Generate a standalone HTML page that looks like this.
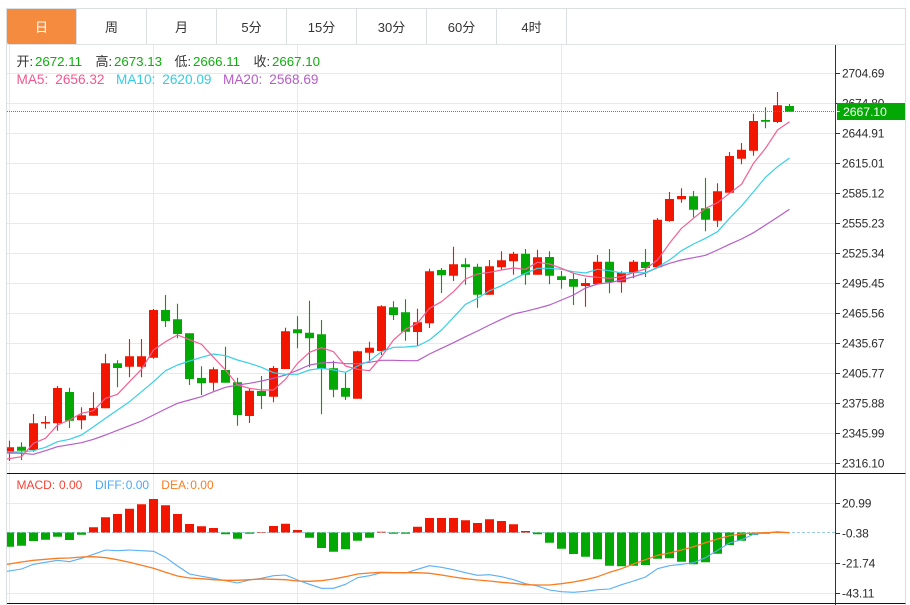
<!DOCTYPE html>
<html lang="zh">
<head>
<meta charset="utf-8">
<title>K线图</title>
<style>
html,body{margin:0;padding:0;background:#fff;width:910px;height:605px;overflow:hidden}
svg{display:block}
text{font-family:"Liberation Sans","Noto Sans CJK SC",sans-serif}
.t{font-size:13px;fill:#333;text-anchor:middle}
.a{font-size:12px;fill:#2b2b2b;letter-spacing:-.15px}
.v{font-size:13.3px;fill:#10ac10}
.l{font-size:13px;fill:#333}
</style>
</head>
<body>
<svg width="910" height="605" viewBox="0 0 910 605" xmlns="http://www.w3.org/2000/svg">
<defs><clipPath id="c"><rect x="7" y="45" width="828" height="560"/></clipPath></defs>

<!-- frame -->
<path d="M6.5 605V8.5H905.5V605" fill="none" stroke="#dcdfe2"/>
<path d="M7 44.5H905.5" stroke="#dfe3e6"/>
<path d="M146.5 9V44M216.5 9V44M286.5 9V44M356.5 9V44M426.5 9V44M496.5 9V44M566.5 9V44M76.5 9V44" stroke="#dcdfe2"/>
<path d="M7 9H76V44H9Q7 44 7 42Z" fill="#f48b3f"/>

<text class="t" x="41.5" y="32" style="fill:#fff">日</text>
<text class="t" x="111.5" y="32">周</text>
<text class="t" x="181.5" y="32">月</text>
<text class="t" x="251.5" y="32">5分</text>
<text class="t" x="321.5" y="32">15分</text>
<text class="t" x="391.5" y="32">30分</text>
<text class="t" x="461.5" y="32">60分</text>
<text class="t" x="531.5" y="32">4时</text>

<!-- grid -->
<path d="M7 73.5H835M7 103.5H835M7 133.5H835M7 163.5H835M7 193.5H835M7 223.5H835M7 253.5H835M7 283.5H835M7 313.5H835M7 343.5H835M7 373.5H835M7 403.5H835M7 433.5H835M7 463.5H835M7 503.5H835M7 563.5H835M7 593.5H835M9.5 45V605M153.5 45V605M297.5 45V605M561.5 45V605" stroke="#e4eaf0" fill="none"/>

<g clip-path="url(#c)">
<!-- zero line -->
<path d="M7 532.5H835" stroke="#9ccbe8" stroke-dasharray="3 2" fill="none"/>

<!-- red wicks -->
<path fill="none" stroke="#f21500" stroke-width="1.1" d="M9.5 440.7V461M33.5 414V451.7M45.5 416V428.7M57.5 386V430.7M81.5 407.3V429.3M93.5 392.3V415.7M105.5 354V408.3M129.5 339V377.3M141.5 339V377.3M153.5 309V358.7M213.5 367.3V390.7M249.5 388.3V423M273.5 366V402.3M285.5 327.7V369M357.5 350.7V398.7M369.5 341.7V361.7M381.5 305.3V355M417.5 308.7V346M429.5 268.7V328M453.5 246.7V281M489.5 260V294.7M501.5 251.3V270M513.5 251.7V274.7M537.5 249.7V274.7M585.5 278.3V306.7M597.5 255V284M621.5 271.3V292.7M633.5 260V278.3M657.5 218V267.3M669.5 192V221.7M681.5 188.3V202.7M717.5 183.3V227M729.5 152V192.7M741.5 143V164.3M753.5 113.7V155.7M777.5 92V123"/>
<!-- green wicks -->
<path fill="none" stroke="#069c06" stroke-width="1.1" d="M21.5 442.3V460M69.5 387.7V428M117.5 360.3V387.3M165.5 295V327M177.5 303.7V338.3M189.5 333.3V385M201.5 366.3V395M225.5 346.7V382.7M237.5 377.7V425.7M261.5 376V409M297.5 316.3V348.3M309.5 300.7V367.3M321.5 320V414.3M333.5 360.7V397.3M345.5 372.7V400M393.5 301.3V320M405.5 299.3V340.7M441.5 268V293M465.5 258.3V284.7M477.5 263.7V307.7M525.5 249V284.7M549.5 251.3V284.3M561.5 271V288.7M573.5 272.7V305M609.5 249V293.3M645.5 249V277M693.5 191V217.3M705.5 178V231.3M765.5 107.3V128.3M789.5 104V111.7"/>
<!-- red bodies -->
<path fill="none" stroke="#f21500" stroke-width="9" d="M9.5 447.3V452.7M33.5 423.3V450M45.5 422V423.5M57.5 388V423.3M81.5 415.3V420.3M93.5 408V415.7M105.5 363.3V408.3M129.5 356.3V366.7M141.5 356.3V366.7M153.5 310V357.7M213.5 369.3V382.7M249.5 390.7V416M273.5 368V396.7M285.5 331.3V369M357.5 351.3V398.7M369.5 347.7V352.7M381.5 306.3V351M417.5 322.3V332M429.5 271.3V323.3M453.5 264.3V275.7M489.5 266.3V294.7M501.5 260.3V267.3M513.5 253.7V261.3M537.5 257.3V274.7M585.5 283V286M597.5 261.7V284M621.5 272.7V282.3M633.5 261.7V272.7M657.5 219.7V267.3M669.5 199V221M681.5 196V199.3M717.5 191.3V220.7M729.5 156V192.7M741.5 149.7V158.7M753.5 121V150.7M777.5 105.3V122"/>
<!-- green bodies -->
<path fill="none" stroke="#04a804" stroke-width="9" d="M21.5 446.7V450.7M69.5 392V420.7M117.5 363.3V368M165.5 310V321M177.5 319.3V334M189.5 333.3V379M201.5 378V383.3M225.5 370V382.7M237.5 382.3V415M261.5 391V396M297.5 329.3V333.3M309.5 332.7V338.3M321.5 334.3V369M333.5 368.3V389.7M345.5 388V396.7M393.5 307.3V315M405.5 312.3V331.7M441.5 270V275.3M465.5 264.3V267M477.5 266.7V294.7M525.5 253.7V274.7M549.5 257V275.7M561.5 276.3V280M573.5 279V286.7M609.5 261.7V282.3M645.5 262V268M693.5 196.3V209.7M705.5 208.3V219.7M765.5 120V121.7M789.5 106V111.7"/>

<!-- MA20 -->
<path fill="none" stroke="#b75dc9" stroke-width="1.2" stroke-linejoin="round" d="M7 453L21.5 453.3 33.5 454.3 45.5 450.7 57.5 446.7 69.5 444.7 81.5 442.7 93.5 439.3 105.5 435 117.5 430.3 129.5 425.7 141.5 421 153.5 415 165.5 409 177.5 403.3 189.5 400 201.5 396.7 213.5 391.7 225.5 387.3 237.5 385 249.5 383.3 261.5 381 273.5 378.3 285.5 375 297.5 370.3 309.5 365 321.5 363 333.5 362.3 345.5 363.7 357.5 363.7 369.5 362.3 381.5 360.3 393.5 360.3 405.5 360.7 417.5 360.7 429.5 354 441.5 348.3 453.5 342.7 465.5 336.7 477.5 331 489.5 325 501.5 319.3 513.5 314 525.5 311.3 537.5 308.3 549.5 305 561.5 300 573.5 295 585.5 288 597.5 284 609.5 282.7 621.5 280 633.5 276.7 645.5 273 657.5 267.7 669.5 263.3 681.5 260 693.5 257.7 705.5 255.3 717.5 250 729.5 244.3 741.5 239 753.5 232.7 765.5 225 777.5 217.3 789.5 209.3"/>
<!-- MA10 -->
<path fill="none" stroke="#38cfe6" stroke-width="1.2" stroke-linejoin="round" d="M7 451.7L21.5 452 33.5 450.7 45.5 447.3 57.5 441.7 69.5 439.3 81.5 435 93.5 426.7 105.5 418.3 117.5 410 129.5 401.7 141.5 391.7 153.5 381.7 165.5 370.7 177.5 365 189.5 361 201.5 357.3 213.5 354 225.5 355.7 237.5 360 249.5 363.3 261.5 367.3 273.5 372.7 285.5 374.3 297.5 374.3 309.5 370 321.5 368.3 333.5 370 345.5 372.3 357.5 366 369.5 361 381.5 351.7 393.5 347.3 405.5 347 417.5 346 429.5 340 441.5 330 453.5 317.3 465.5 304.3 477.5 298.3 489.5 290.7 501.5 285.7 513.5 279.3 525.5 273.3 537.5 268.3 549.5 268.3 561.5 269.3 573.5 271.7 585.5 273 597.5 269.3 609.5 270.7 621.5 273 633.5 272.7 645.5 272.7 657.5 267.3 669.5 260 681.5 250.7 693.5 244 705.5 238.3 717.5 231.7 729.5 218.3 741.5 206 753.5 191.7 765.5 177.3 777.5 166.7 789.5 158"/>
<!-- MA5 -->
<path fill="none" stroke="#f45f92" stroke-width="1.2" stroke-linejoin="round" d="M7 459L21.5 456.7 33.5 443.3 45.5 438.3 57.5 425 69.5 420 81.5 413.3 93.5 410.7 105.5 398.3 117.5 394.3 129.5 381.7 141.5 369.3 153.5 350 165.5 341.7 177.5 335 189.5 339.7 201.5 344.3 213.5 357.3 225.5 370 237.5 385 249.5 388.3 261.5 390 273.5 390 285.5 379.3 297.5 363.3 309.5 352.3 321.5 347.7 333.5 351.7 345.5 366 357.5 369.3 369.5 370.7 381.5 356.7 393.5 340 405.5 329.3 417.5 323.3 429.5 308.3 441.5 301.7 453.5 291.7 465.5 279 477.5 274 489.5 272.3 501.5 270 513.5 268 525.5 269.3 537.5 262.3 549.5 264 561.5 268.3 573.5 273.3 585.5 276 597.5 277.3 609.5 278.3 621.5 276.7 633.5 272.7 645.5 269 657.5 260 669.5 243.3 681.5 228.3 693.5 218.3 705.5 208.3 717.5 202.7 729.5 193.3 741.5 184.3 753.5 163.3 765.5 148.3 777.5 130 789.5 121.7"/>

<!-- MACD bars -->
<path fill="none" stroke="#f21500" stroke-width="9" d="M93.5 527.3V532.5M105.5 517.3V532.5M117.5 514V532.5M129.5 508.7V532.5M141.5 504.3V532.5M153.5 499V532.5M165.5 505.3V532.5M177.5 514V532.5M189.5 524V532.5M201.5 526.3V532.5M213.5 528V532.5M261.5 532V532.5M273.5 526V532.5M285.5 523.7V532.5M297.5 530V532.5M381.5 531.7V532.5M417.5 526.7V532.5M429.5 518V532.5M441.5 518V532.5M453.5 518V532.5M465.5 520.3V532.5M477.5 523V532.5M489.5 519.3V532.5M501.5 521V532.5M513.5 524.3V532.5M525.5 531V532.5M777.5 531.7V532.5"/>
<path fill="none" stroke="#04a804" stroke-width="9" d="M9.5 532.5V546.7M21.5 532.5V545.7M33.5 532.5V541M45.5 532.5V539.7M57.5 532.5V536.7M69.5 532.5V540M81.5 532.5V534.7M225.5 532.5V534.3M237.5 532.5V538.7M249.5 532.5V533.7M309.5 532.5V537.7M321.5 532.5V548M333.5 532.5V551.7M345.5 532.5V549.3M357.5 532.5V540.7M369.5 532.5V537.7M393.5 532.5V533.7M405.5 532.5V533.7M537.5 532.5V534.3M549.5 532.5V542.7M561.5 532.5V548.7M573.5 532.5V554M585.5 532.5V556.7M597.5 532.5V559.3M609.5 532.5V565.7M621.5 532.5V566.3M633.5 532.5V565.7M645.5 532.5V565M657.5 532.5V558.7M669.5 532.5V558.3M681.5 532.5V561.7M693.5 532.5V564.3M705.5 532.5V562.3M717.5 532.5V553.7M729.5 532.5V545M741.5 532.5V540.7M753.5 532.5V535M765.5 532.5V533.7"/>

<!-- DIFF -->
<path fill="none" stroke="#5bb0f6" stroke-width="1.1" stroke-linejoin="round" d="M7 571.3L21.5 569 33.5 564.3 45.5 562.3 57.5 560.3 69.5 561.7 81.5 558.3 93.5 554.3 105.5 550 117.5 550.7 129.5 550 141.5 550.7 153.5 551.3 165.5 557.3 177.5 566 189.5 574 201.5 576.3 213.5 578.3 225.5 580.7 237.5 583 249.5 580 261.5 578.3 273.5 575.7 285.5 575 297.5 580 309.5 584.3 321.5 588.3 333.5 588.3 345.5 584.3 357.5 577.7 369.5 575.7 381.5 572.7 393.5 573 405.5 573 417.5 569.3 429.5 565.7 441.5 567.3 453.5 569.7 465.5 572.7 477.5 575.3 489.5 574.7 501.5 576.7 513.5 579.7 525.5 583.7 537.5 586 549.5 590 561.5 591.7 573.5 592.3 585.5 591.3 597.5 589.7 609.5 589 621.5 584.7 633.5 581 645.5 577 657.5 568.7 669.5 565.7 681.5 564.3 693.5 562.7 705.5 557.7 717.5 550.3 729.5 543 741.5 539.7 753.5 534.3 765.5 533 777.5 531.7 789.5 532.7"/>
<!-- DEA -->
<path fill="none" stroke="#f97c22" stroke-width="1.3" stroke-linejoin="round" d="M7 564.3L21.5 562 33.5 560.3 45.5 559.3 57.5 558.3 69.5 558 81.5 557 93.5 556.7 105.5 557.7 117.5 559.7 129.5 562.3 141.5 565.3 153.5 568.3 165.5 572.3 177.5 576 189.5 578 201.5 578.7 213.5 579.7 225.5 580.3 237.5 580.3 249.5 579.7 261.5 579 273.5 579.3 285.5 579.7 297.5 581 309.5 581.3 321.5 580.7 333.5 579 345.5 576.7 357.5 574 369.5 573 381.5 572.3 393.5 572.7 405.5 572.7 417.5 572.7 429.5 573.3 441.5 575 453.5 577 465.5 578.7 477.5 580 489.5 581 501.5 582.3 513.5 583.3 525.5 584.7 537.5 585 549.5 585 561.5 583.7 573.5 582 585.5 579.7 597.5 576.7 609.5 572.3 621.5 568.7 633.5 564 645.5 559.7 657.5 555.3 669.5 553 681.5 550 693.5 546.7 705.5 542.7 717.5 539 729.5 535.7 741.5 534 753.5 533 765.5 532.7 777.5 532.3 789.5 532.7"/>

<!-- last price line -->
<path d="M7 111.5H835" stroke="#0cc00c" stroke-dasharray="1 1" fill="none"/>
</g>

<!-- info text -->
<text class="l" x="16.5" y="66">开:</text><text class="v" x="35" y="66">2672.11</text>
<text class="l" x="95.5" y="66">高:</text><text class="v" x="114" y="66">2673.13</text>
<text class="l" x="174.5" y="66">低:</text><text class="v" x="193" y="66">2666.11</text>
<text class="l" x="253.5" y="66">收:</text><text class="v" x="272" y="66">2667.10</text>

<text x="16.5" y="84" font-size="13.6" fill="#f6568e">MA5:</text><text x="55.3" y="84" font-size="13.6" fill="#f6568e">2656.32</text>
<text x="116" y="84" font-size="13.6" fill="#2fcfe6">MA10:</text><text x="162.3" y="84" font-size="13.6" fill="#2fcfe6">2620.09</text>
<text x="223" y="84" font-size="13.6" fill="#b65cc9">MA20:</text><text x="269.3" y="84" font-size="13.6" fill="#b65cc9">2568.69</text>

<text x="16.5" y="489" font-size="12" fill="#f44336">MACD:</text><text x="59" y="489" font-size="12" fill="#f44336">0.00</text>
<text x="95" y="489" font-size="12" fill="#4ea8f5">DIFF:</text><text x="125.7" y="489" font-size="12" fill="#4ea8f5">0.00</text>
<text x="161.3" y="489" font-size="12" fill="#f97c22">DEA:</text><text x="190.3" y="489" font-size="12" fill="#f97c22">0.00</text>

<!-- separators and axis -->
<path d="M7 473.5H905.5M7 603.5H905.5" stroke="#111" fill="none"/>
<path d="M835.5 45V605" stroke="#333" fill="none"/>
<path d="M836 73.5h4M836 103.5h4M836 133.5h4M836 163.5h4M836 193.5h4M836 223.5h4M836 253.5h4M836 283.5h4M836 313.5h4M836 343.5h4M836 373.5h4M836 403.5h4M836 433.5h4M836 463.5h4M836 503.5h4M836 533.5h4M836 563.5h4M836 593.5h4" stroke="#333" fill="none"/>

<g class="labels">
<text class="a" x="842" y="77.5">2704.69</text>
<text class="a" x="842" y="107.5">2674.80</text>
<text class="a" x="842" y="137.5">2644.91</text>
<text class="a" x="842" y="167.5">2615.01</text>
<text class="a" x="842" y="197.5">2585.12</text>
<text class="a" x="842" y="227.5">2555.23</text>
<text class="a" x="842" y="257.5">2525.34</text>
<text class="a" x="842" y="287.5">2495.45</text>
<text class="a" x="842" y="317.5">2465.56</text>
<text class="a" x="842" y="347.5">2435.67</text>
<text class="a" x="842" y="377.5">2405.77</text>
<text class="a" x="842" y="407.5">2375.88</text>
<text class="a" x="842" y="437.5">2345.99</text>
<text class="a" x="842" y="467.5">2316.10</text>
<text class="a" x="842" y="507.5">20.99</text>
<text class="a" x="842" y="537.5">-0.38</text>
<text class="a" x="842" y="567.5">-21.74</text>
<text class="a" x="842" y="597.5">-43.11</text>
</g>

<!-- current price tag -->
<rect x="837" y="103" width="68" height="17" fill="#04a804"/>
<path d="M836 111.5h4" stroke="#fff" fill="none"/>
<text x="843" y="116" font-size="12.3" fill="#fff" letter-spacing="-.1">2667.10</text>
</svg>
</body>
</html>
